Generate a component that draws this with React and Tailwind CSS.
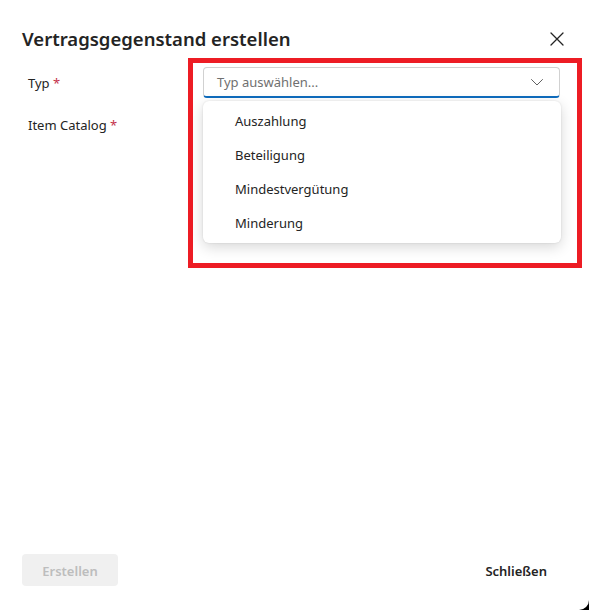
import React from "react";

const options = ["Auszahlung", "Beteiligung", "Mindestvergütung", "Minderung"];

const ChevronDown = () => (
  <svg width="14" height="14" viewBox="0 0 14 14" fill="none">
    <path d="M1.5 4.5l5.5 5.5 5.5-5.5" stroke="#616161" strokeWidth="1" strokeLinecap="round" strokeLinejoin="round" />
  </svg>
);

const CloseIcon = () => (
  <svg width="14" height="14" viewBox="0 0 14 14" fill="none">
    <path d="M1 1l12 12M13 1L1 13" stroke="#242424" strokeWidth="1.3" strokeLinecap="round" />
  </svg>
);

const Field = ({ label, children }) => (
  <div className="flex items-center h-[31px]">
    <div className="w-[181px] pl-[6px] pt-[2px] text-[13px] text-[#242424]">
      {label} <span className="text-[#c4314b]">*</span>
    </div>
    <div className="w-[357px] relative">{children}</div>
  </div>
);

export default function App() {
  return (
    <div className="w-[589px] h-[610px] bg-black" style={{ fontFamily: '"Noto Sans", "Open Sans", sans-serif' }}>
      <div className="relative w-full h-full bg-white rounded-br-[10px] flex flex-col">
        <div className="flex items-center justify-between pl-[22px] pr-[25px] pt-[26px]">
          <h2 className="text-[18.5px] font-semibold text-[#242424] leading-[26px]">Vertragsgegenstand erstellen</h2>
          <button className="w-[14px] h-[14px] flex items-center justify-center">
            <CloseIcon />
          </button>
        </div>

        <div className="flex flex-col gap-[11px] pl-[22px] mt-[15px]">
          <Field label="Typ">
            <div className="h-[31px] flex items-center justify-between pl-[13px] pr-[15px] border border-[#d1d1d1] border-b-2 border-b-[#0f6cbd] rounded-[4px]">
              <span className="pt-[2px] text-[13px] text-[#707070]">Typ auswählen...</span>
              <ChevronDown />
            </div>
            <div className="absolute z-10 left-0 right-[-1px] top-[34px] bg-white rounded-[6px] py-[3px] shadow-[0_4px_14px_rgba(0,0,0,0.16),0_0_2px_rgba(0,0,0,0.12)]">
              {options.map((o) => (
                <div key={o} className="h-[34px] flex items-center pl-[32px] pt-[2px] text-[13px] text-[#242424]">
                  {o}
                </div>
              ))}
            </div>
          </Field>
          <Field label="Item Catalog">
            <div className="h-[31px]" />
          </Field>
        </div>

        <div className="mt-auto flex items-center justify-between pl-[22px] pr-[22px] pb-[24px]">
          <button className="w-[96px] h-[32px] pt-[3px] rounded-[4px] bg-[#f0f0f0] text-[#bdbdbd] text-[13px] font-semibold">
            Erstellen
          </button>
          <button className="h-[32px] px-[20px] pt-[3px] text-[13px] font-semibold text-[#242424]">Schließen</button>
        </div>

        <div className="absolute left-[188px] top-[58px] w-[394px] h-[210px] border-[5px] border-[#ed1c24] pointer-events-none" />
      </div>
    </div>
  );
}
